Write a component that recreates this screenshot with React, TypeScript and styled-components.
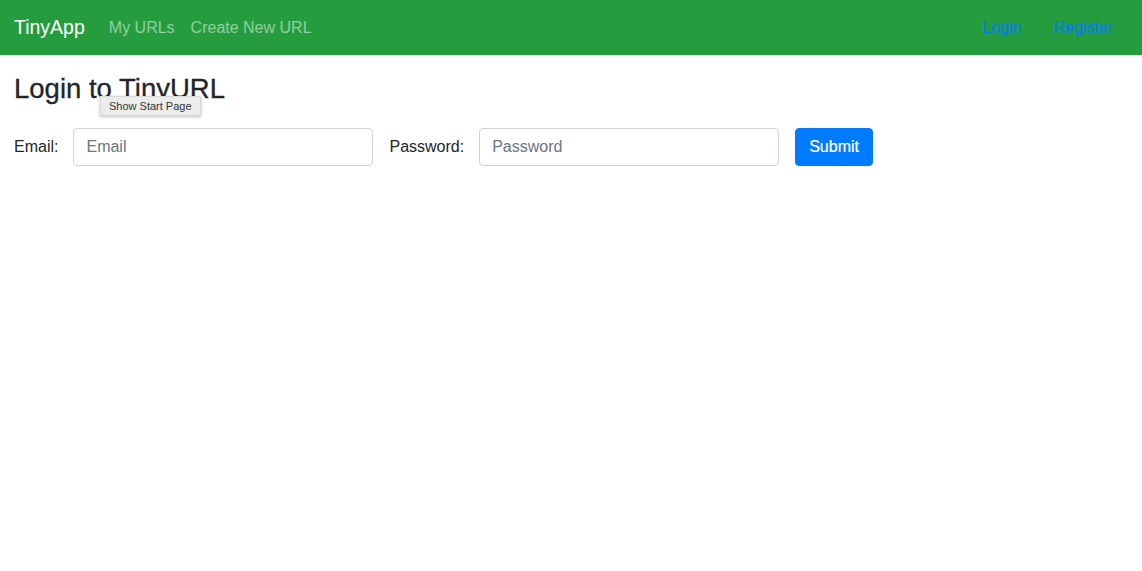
import React from 'react';
import styled, { createGlobalStyle } from 'styled-components';

const GlobalStyle = createGlobalStyle`
  body {
    margin: 0;
    background: #fff;
    font-family: "Liberation Sans", Arial, sans-serif;
    color: #212529;
  }
  * {
    box-sizing: border-box;
  }
`;

const Navbar = styled.nav`
  height: 55px;
  background-color: #259d3f;
  display: flex;
  align-items: center;
  padding: 0 14px;
`;

const Brand = styled.a`
  color: #fff;
  font-size: 19.5px;
  margin-right: 24px;
  text-decoration: none;
`;

const NavGroup = styled.div<{ $right?: boolean }>`
  display: flex;
  align-items: center;
  gap: ${({ $right }) => ($right ? '32px' : '16px')};
  margin-left: ${({ $right }) => ($right ? 'auto' : '0')};
  margin-right: ${({ $right }) => ($right ? '15px' : '0')};
`;

const NavLink = styled.a<{ $blue?: boolean }>`
  font-size: 16px;
  text-decoration: none;
  color: ${({ $blue }) => ($blue ? '#007bff' : 'rgba(255, 255, 255, 0.5)')};
`;

const Main = styled.main`
  padding: 17px 14px;
  position: relative;
`;

const Heading = styled.h3`
  margin: 0 0 22px;
  font-size: 27.5px;
  font-weight: 500;
  line-height: 34px;
  -webkit-text-stroke: 0.3px #212529;
`;

const Tooltip = styled.div`
  position: absolute;
  top: 41px;
  left: 100px;
  height: 20px;
  padding: 0 8px;
  display: flex;
  align-items: center;
  background: #ececec;
  border: 1px solid #d8d8d8;
  box-shadow: 0 1px 3px rgba(0, 0, 0, 0.25);
  font-size: 11px;
  color: #333;
`;

const Form = styled.form`
  display: flex;
  align-items: center;
`;

const Label = styled.label`
  font-size: 16px;
  margin-right: 15px;
`;

const Input = styled.input`
  width: 300px;
  height: 38px;
  padding: 6px 12px;
  font-size: 16px;
  font-family: inherit;
  border: 1px solid #ced4da;
  border-radius: 4px;
  margin-right: 16px;
  color: #495057;
  &::placeholder {
    color: #6c757d;
  }
`;

const SubmitButton = styled.button`
  height: 38px;
  padding: 0 13px;
  font-size: 16px;
  font-family: inherit;
  font-weight: 500;
  color: #fff;
  background: #007bff;
  border: 1px solid #007bff;
  border-radius: 4px;
  -webkit-text-stroke: 0.2px #fff;
`;

export default function App() {
  return (
    <>
      <GlobalStyle />
      <Navbar>
        <Brand href="#">TinyApp</Brand>
        <NavGroup>
          <NavLink href="#">My URLs</NavLink>
          <NavLink href="#">Create New URL</NavLink>
        </NavGroup>
        <NavGroup $right>
          <NavLink $blue href="#">Login</NavLink>
          <NavLink $blue href="#">Register</NavLink>
        </NavGroup>
      </Navbar>
      <Main>
        <Heading>Login to TinyURL</Heading>
        <Tooltip>Show Start Page</Tooltip>
        <Form onSubmit={(e) => e.preventDefault()}>
          <Label>Email:</Label>
          <Input type="text" placeholder="Email" />
          <Label>Password:</Label>
          <Input type="password" placeholder="Password" />
          <SubmitButton type="submit">Submit</SubmitButton>
        </Form>
      </Main>
    </>
  );
}
